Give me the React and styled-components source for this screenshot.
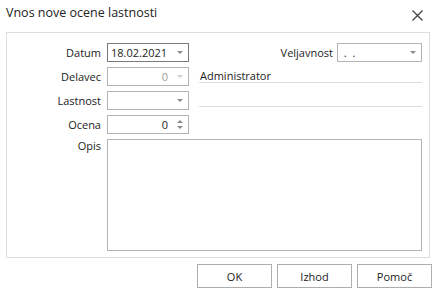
import React from "react";
import styled, { createGlobalStyle } from "styled-components";

const GlobalStyle = createGlobalStyle`
  html, body {
    margin: 0;
    padding: 0;
    background: #ffffff;
  }
  body {
    font-family: "Open Sans", "Noto Sans", sans-serif;
    font-size: 11px;
    color: #1e1e1e;
  }
`;

const Dialog = styled.div`
  width: 438px;
  height: 294px;
  box-sizing: border-box;
  display: flex;
  flex-direction: column;
`;

const TitleBar = styled.div`
  height: 32px;
  display: flex;
  align-items: flex-start;
  justify-content: space-between;
  padding: 4px 15px 0 6px;
  box-sizing: border-box;
`;

const Title = styled.span`
  font-size: 12.5px;
  line-height: 18px;
  color: #222;
`;

const Close = styled.svg`
  width: 11px;
  height: 11px;
  margin-top: 6px;
`;

const Panel = styled.div`
  margin: 0 8px 0 6px;
  height: 226px;
  box-sizing: border-box;
  border: 1px solid #dedede;
  padding: 10px 7px 0 0;
  display: grid;
  grid-template-columns: 94px 82px 1fr;
  grid-template-rows: 19px 19px 19px 19px 112px;
  row-gap: 5px;
  column-gap: 6px;
`;

const Label = styled.div`
  text-align: right;
  line-height: ${(p) => (p.top ? "14px" : "19px")};
  color: #222;
`;

const Field = styled.div`
  box-sizing: border-box;
  height: 19px;
  border: 1px solid ${(p) => (p.focused ? "#7a7a7a" : "#b4b4b4")};
  display: flex;
  align-items: center;
  padding: 0 0 0 3px;
  color: ${(p) => (p.disabled ? "#a0a0a0" : "#1e1e1e")};
`;

const Value = styled.span`
  flex: 1;
  text-align: ${(p) => (p.right ? "right" : "left")};
  line-height: 17px;
  padding-right: ${(p) => (p.right ? "4px" : "0")};
`;

const DropButton = styled.span`
  width: 16px;
  height: 17px;
  display: flex;
  align-items: center;
  justify-content: center;
  &::after {
    content: "";
    border-left: 3px solid transparent;
    border-right: 3px solid transparent;
    border-top: 3px solid ${(p) => (p.disabled ? "#cfcfcf" : "#8a8a8a")};
  }
`;

const Spin = styled.span`
  width: 16px;
  height: 17px;
  display: flex;
  flex-direction: column;
  align-items: center;
  justify-content: center;
  gap: 3px;
  &::before {
    content: "";
    border-left: 3px solid transparent;
    border-right: 3px solid transparent;
    border-bottom: 3px solid #8a8a8a;
  }
  &::after {
    content: "";
    border-left: 3px solid transparent;
    border-right: 3px solid transparent;
    border-top: 3px solid #8a8a8a;
  }
`;

const RightArea = styled.div`
  display: flex;
  justify-content: flex-end;
  align-items: center;
  gap: 4px;
`;

const ReadOnly = styled.div`
  margin-left: 4px;
  height: 13px;
  padding: 2px 0 0 1px;
  border-bottom: 1px solid #dcdcdc;
  line-height: 13px;
  color: #222;
  align-self: start;
`;

const Memo = styled.div`
  grid-column: 2 / 4;
  box-sizing: border-box;
  border: 1px solid #b4b4b4;
`;

const Footer = styled.div`
  display: flex;
  justify-content: flex-end;
  gap: 5px;
  padding: 6px 6px 0 0;
`;

const Button = styled.button`
  width: 75px;
  height: 24px;
  box-sizing: border-box;
  border: 1px solid #adadad;
  background: #ffffff;
  font-family: inherit;
  font-size: 11px;
  color: #222;
  padding: 0;
`;

export default function App() {
  return (
    <Dialog>
      <GlobalStyle />
      <TitleBar>
        <Title>Vnos nove ocene lastnosti</Title>
        <Close viewBox="0 0 11 11">
          <path d="M0.5 0.5 L10.5 10.5 M10.5 0.5 L0.5 10.5" stroke="#444" strokeWidth="1.3" fill="none" />
        </Close>
      </TitleBar>
      <Panel>
        <Label>Datum</Label>
        <Field focused>
          <Value>18.02.2021</Value>
          <DropButton />
        </Field>
        <RightArea>
          <span>Veljavnost</span>
          <Field style={{ width: 85 }}>
            <Value>&nbsp;.&nbsp;&nbsp;.</Value>
            <DropButton />
          </Field>
        </RightArea>

        <Label>Delavec</Label>
        <Field disabled>
          <Value right>0</Value>
          <DropButton disabled />
        </Field>
        <ReadOnly>Administrator</ReadOnly>

        <Label>Lastnost</Label>
        <Field>
          <Value />
          <DropButton />
        </Field>
        <ReadOnly />

        <Label>Ocena</Label>
        <Field>
          <Value right>0</Value>
          <Spin />
        </Field>
        <div />

        <Label top>Opis</Label>
        <Memo />
      </Panel>
      <Footer>
        <Button>OK</Button>
        <Button>Izhod</Button>
        <Button>Pomoč</Button>
      </Footer>
    </Dialog>
  );
}
